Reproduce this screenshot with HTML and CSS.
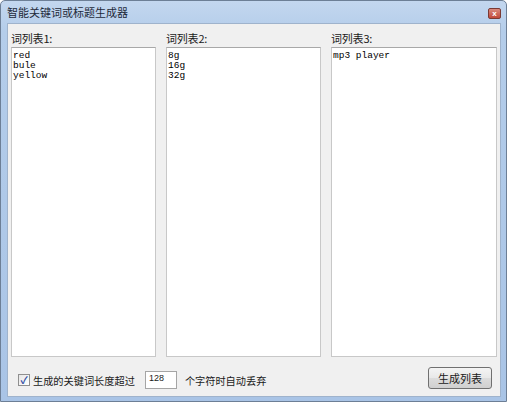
FILE: index.html
```html
<!DOCTYPE html>
<html lang="zh-CN">

<head>
  <meta charset="UTF-8">
  <title>智能关键词或标题生成器</title>
  <link rel="stylesheet" href="styles.css">
</head>

<body>
  <div class="window">
    <!-- 标题栏 -->
    <div class="titlebar">
      <span class="title">智能关键词或标题生成器</span>
      <span class="close-btn">x</span>
    </div>

    <div class="client">
      <div class="lists">
        <div class="list-col">
          <label class="list-label">词列表1:</label>
          <div class="list-box">red
bule
yellow</div>
        </div>
        <div class="list-col">
          <label class="list-label">词列表2:</label>
          <div class="list-box">8g
16g
32g</div>
        </div>
        <div class="list-col">
          <label class="list-label">词列表3:</label>
          <div class="list-box">mp3 player</div>
        </div>
      </div>

      <div class="bottom-row">
        <div class="options">
          <span class="check">&#10003;</span>
          <span class="opt-text">生成的关键词长度超过</span>
          <span class="num-input">128</span>
          <span class="opt-text">个字符时自动丢弃</span>
        </div>
        <button class="gen-btn">生成列表</button>
      </div>
    </div>
  </div>
</body>

</html>
```

FILE: styles.css
```css
* {
  margin: 0;
  padding: 0;
  box-sizing: border-box;
}

body {
  background: #ffffff;
  font-family: "Noto Sans CJK SC", "Liberation Sans", sans-serif;
  font-size: 12px;
  color: #000;
}

.window {
  width: 507px;
  height: 402px;
  border: 1px solid #6d7f96;
  border-radius: 5px 5px 0 0;
  background: linear-gradient(180deg, #c3d7ef 0%, #b4cdea 30px, #a9c4e6 100%);
  display: flex;
  flex-direction: column;
}

/* 标题栏 */
.titlebar {
  height: 22px;
  display: flex;
  align-items: center;
  justify-content: space-between;
  padding: 0 5px 0 6px;
}

.title {
  font-size: 11px;
  color: #1e2a3a;
}

.close-btn {
  width: 13px;
  height: 11px;
  margin-top: 3px;
  background: linear-gradient(180deg, #d98a7e, #c2493a);
  border: 1px solid #7a3a34;
  border-radius: 2px;
  color: #fff;
  font-family: "Liberation Sans", sans-serif;
  font-size: 8px;
  font-weight: bold;
  line-height: 9px;
  text-align: center;
}

.client {
  flex: 1;
  margin: 0 5px 4px 6px;
  background: #f0f0f0;
  border: 1px solid #9fb3cc;
  padding: 8px 3px 0 3px;
  display: flex;
  flex-direction: column;
}

.lists {
  display: grid;
  grid-template-columns: 145px 155px 166px;
  column-gap: 10px;
}

.list-col {
  display: flex;
  flex-direction: column;
}

.list-label {
  height: 15px;
  font-size: 11px;
  line-height: 13px;
  letter-spacing: -0.2px;
  color: #1a1a1a;
}

.list-box {
  height: 310px;
  background: #fff;
  border: 1px solid #c8c8c8;
  border-top-color: #a8a8a8;
  padding: 3px 1px;
  font-family: "Liberation Mono", monospace;
  font-size: 9.5px;
  line-height: 10px;
  white-space: pre;
}

.bottom-row {
  display: flex;
  justify-content: space-between;
  align-items: flex-start;
  margin-top: 10px;
  padding-right: 5px;
}

.options {
  display: flex;
  align-items: center;
  margin-top: 4px;
  padding-left: 7px;
  font-size: 10.2px;
  color: #1a1a1a;
}

.check {
  width: 12px;
  height: 12px;
  border: 1px solid #8f8f8f;
  background: linear-gradient(135deg, #e6e6e6, #ffffff);
  color: #2c48a0;
  font-size: 10px;
  font-weight: bold;
  line-height: 10px;
  text-align: center;
  margin-right: 3px;
}

.num-input {
  width: 32px;
  height: 18px;
  margin: 0 8px 0 10px;
  background: #fff;
  border: 1px solid #a5a5a5;
  font-family: "Liberation Sans", sans-serif;
  font-size: 9px;
  line-height: 12px;
  padding-left: 3px;
}

.gen-btn {
  width: 64px;
  height: 22px;
  border: 1px solid #707070;
  border-radius: 3px;
  background: linear-gradient(180deg, #f4f4f4 0%, #e8e8e8 50%, #dcdcdc 51%, #d0d0d0 100%);
  font-family: "Noto Sans CJK SC", sans-serif;
  font-size: 11px;
  color: #1a1a1a;
}
```
